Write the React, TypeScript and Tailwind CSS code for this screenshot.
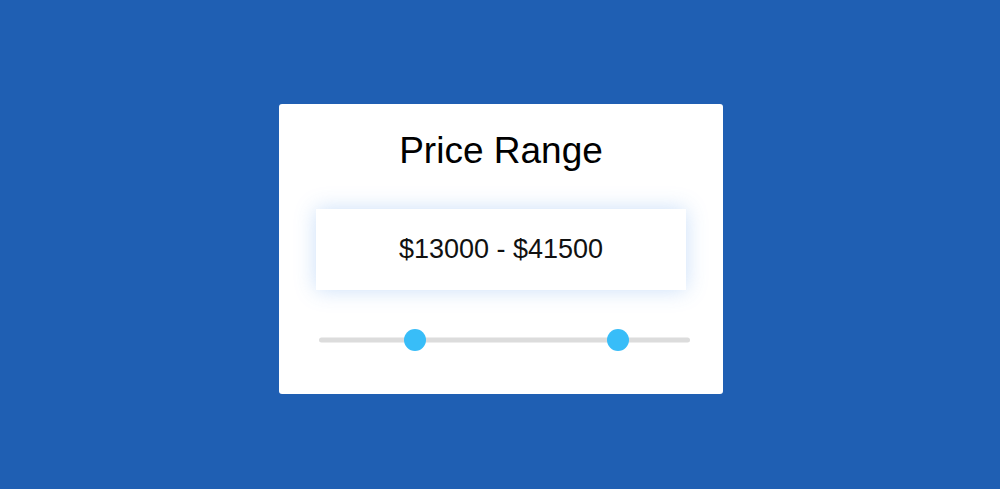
const MIN = 1000;
const MAX = 50000;
const THUMB = 22;

const RangeSlider = ({ low, high }: { low: number; high: number }) => {
  const pct = (v: number) => (v - MIN) / (MAX - MIN);

  return (
    <div className="relative ml-[3px] h-[22px] w-[371px]">
      <div className="absolute left-0 right-0 top-1/2 h-[5px] -translate-y-1/2 rounded-full bg-[#dcdcdc]" />
      {[low, high].map((v) => (
        <div
          key={v}
          className="absolute top-0 h-[22px] w-[22px] rounded-full bg-[#38bdf8]"
          style={{ left: `calc(${pct(v)} * (100% - ${THUMB}px))` }}
        />
      ))}
    </div>
  );
};

const App = () => {
  const low = 13000;
  const high = 41500;

  return (
    <div className="flex h-[489px] w-full items-start justify-center bg-[#1f5fb3] pl-[2px] pt-[104px] font-['Liberation_Sans',Arial,sans-serif]">
      <div className="flex h-[290px] w-[444px] flex-col rounded-[3px] bg-white px-[37px] pt-[26px]">
        <h1 className="text-center text-[37px] leading-[1.15] text-black">
          Price Range
        </h1>
        <div className="mt-[36px] flex h-[81px] items-center justify-center bg-white shadow-[0_0_20px_rgba(66,140,235,0.28)]">
          <span className="text-[27px] text-[#111]">
            ${low} - ${high}
          </span>
        </div>
        <div className="mt-[39px]">
          <RangeSlider low={low} high={high} />
        </div>
      </div>
    </div>
  );
};

export default App;
